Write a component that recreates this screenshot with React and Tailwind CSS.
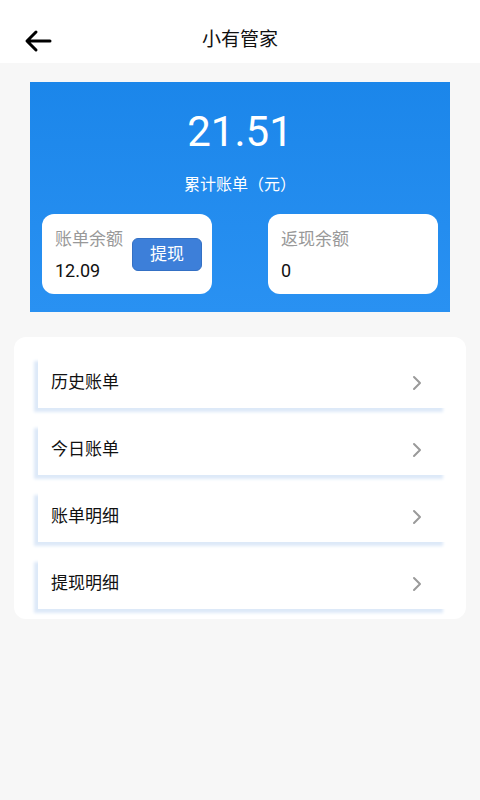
import React from 'react'

const font = { fontFamily: 'Roboto, "Noto Sans CJK SC", sans-serif' }

function Row({ label }) {
  return (
    <div className="h-[51px] bg-white flex items-center justify-between pl-[13px] pr-[24px] shadow-[-4px_4px_3px_#dde9f8]">
      <span className="text-[17px] text-[#111]">{label}</span>
      <svg width="12" height="16" viewBox="0 0 12 16" fill="none">
        <path d="M3 2 L9 8 L3 14" stroke="#9a9a9a" strokeWidth="2" strokeLinecap="round" strokeLinejoin="round" />
      </svg>
    </div>
  )
}

export default function App() {
  const rows = ['历史账单', '今日账单', '账单明细', '提现明细']

  return (
    <div className="w-[480px] h-[800px] bg-[#f7f7f7]" style={font}>
      <header className="h-[63px] bg-white relative flex items-center justify-center">
        <svg className="absolute left-[24px] top-[29px]" width="28" height="24" viewBox="0 0 28 24" fill="none">
          <path d="M26 12 H4 M12 3 L3 12 L12 21" stroke="#000" strokeWidth="3" strokeLinecap="round" strokeLinejoin="round" />
        </svg>
        <h1 className="text-[19px] text-[#111] mt-[18px]">小有管家</h1>
      </header>

      <section className="mt-[19px] mx-[30px] h-[230px] bg-gradient-to-b from-[#1b86ea] to-[#2991f2] flex flex-col items-center">
        <p className="mt-[24px] text-[42px] leading-[52px] text-white">21.51</p>
        <p className="mt-[16px] text-[16px] leading-[22px] text-white">累计账单（元）</p>
        <div className="mt-[18px] w-full px-[12px] flex justify-between">
          <div className="w-[170px] h-[80px] bg-white rounded-[12px] pl-[13px] pt-[14px] flex justify-between">
            <div>
              <p className="text-[17px] leading-[22px] text-[#999]">账单余额</p>
              <p className="mt-[10px] text-[18px] leading-[22px] text-[#111]">12.09</p>
            </div>
            <button className="mt-[10px] mr-[10px] w-[70px] h-[33px] rounded-[6px] bg-[#3d7fd9] border border-[#3470c4] text-white text-[17px] leading-none">
              提现
            </button>
          </div>
          <div className="w-[170px] h-[80px] bg-white rounded-[12px] pl-[13px] pt-[14px]">
            <p className="text-[17px] leading-[22px] text-[#999]">返现余额</p>
            <p className="mt-[10px] text-[18px] leading-[22px] text-[#111]">0</p>
          </div>
        </div>
      </section>

      <section className="mt-[25px] mx-[14px] bg-white rounded-[12px] pl-[24px] pr-[19px] pt-[20px] pb-[10px] flex flex-col gap-[16px]">
        {rows.map((r) => (
          <Row key={r} label={r} />
        ))}
      </section>
    </div>
  )
}
